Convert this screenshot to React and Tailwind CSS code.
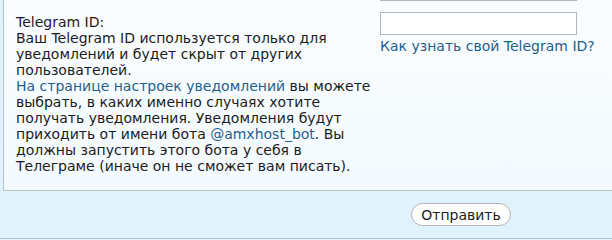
export default function App() {
  return (
    <div
      className="h-[240px] w-[612px] overflow-hidden bg-[#e0f3fd] text-[14px] leading-4 text-[#1c1c1c]"
      style={{ fontFamily: '"DejaVu Sans", Verdana, sans-serif' }}
    >
      <div className="ml-[3px] flex h-[191px] border-b border-l border-[#b9c3cb] bg-gradient-to-b from-[#fafdff] to-[#f3faff]">
        <div className="w-[376px] shrink-0 whitespace-nowrap pl-[12px] pt-[14px]">
          <div>Telegram ID:</div>
          <div>
            Ваш Telegram ID используется только для
            <br />
            уведомлений и будет скрыт от других
            <br />
            пользователей.
          </div>
          <div>
            <a className="text-[#1f5f8b]">На странице настроек уведомлений</a> вы можете
            <br />
            выбрать, в каких именно случаях хотите
            <br />
            получать уведомления. Уведомления будут
            <br />
            приходить от имени бота <a className="text-[#1f5f8b]">@amxhost_bot</a>. Вы
            <br />
            должны запустить этого бота у себя в
            <br />
            Телеграме (иначе он не сможет вам писать).
          </div>
        </div>
        <div>
          <div className="h-px w-[197px] bg-[#b5b5b5]" />
          <input
            type="text"
            className="mt-[11px] block h-[23px] w-[197px] border border-[#b5b5b5] bg-white"
          />
          <a className="mt-[3px] block leading-[17px] text-[#1f5f8b]">
            Как узнать свой Telegram ID?
          </a>
        </div>
      </div>
      <div className="flex h-[48px] items-start border-b border-[#b9c3cb] pl-[411px] pt-[12px]">
        <button className="h-[23px] w-[100px] rounded-full border border-[#b3b3b3] bg-white text-[#1c1c1c]">
          Отправить
        </button>
      </div>
    </div>
  );
}
